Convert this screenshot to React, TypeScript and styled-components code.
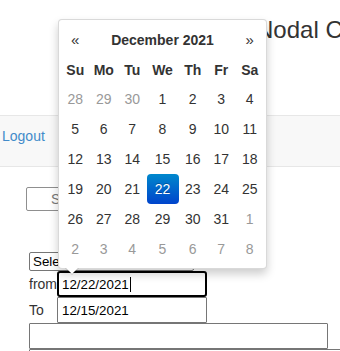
import React from 'react';
import styled, { createGlobalStyle, css } from 'styled-components';

const GlobalStyle = createGlobalStyle`
  html, body {
    margin: 0;
    padding: 0;
    background: #fff;
  }
  body {
    font-family: "Liberation Sans", Arial, sans-serif;
    font-size: 14px;
    color: #333;
    overflow: hidden;
  }
  * {
    box-sizing: border-box;
  }
`;

const Page = styled.div`
  position: relative;
  width: 340px;
  height: 351px;
  overflow: hidden;
`;

const Header = styled.header`
  height: 115px;
  padding: 17px 0 0 256px;
`;

const Title = styled.h3`
  margin: 0;
  font-size: 24px;
  line-height: 26px;
  font-weight: 400;
  color: #333;
  white-space: nowrap;
`;

const Navbar = styled.nav`
  height: 52px;
  background: #f8f8f8;
  border-top: 1px solid #e7e7e7;
  border-bottom: 1px solid #e7e7e7;
  display: flex;
  align-items: flex-start;
  padding: 10px 0 0 2px;
`;

const NavLink = styled.a`
  color: #428bca;
  text-decoration: none;
  font-size: 14px;
  line-height: 20px;
`;

const Main = styled.main`
  display: flex;
  flex-direction: column;
  align-items: flex-start;
  padding: 20px 0 0 29px;
`;

const SearchButton = styled.button`
  margin-left: -3px;
  height: 24px;
  padding: 0 24px;
  background: #fff;
  border: 1px solid #8f8f8f;
  border-radius: 2px;
  color: #777;
  font-family: "Liberation Sans", Arial, sans-serif;
  font-size: 14px;
`;

const Select = styled.div`
  margin-top: 41px;
  width: 165px;
  height: 19px;
  border: 1px solid #767676;
  border-radius: 2px;
  padding-left: 3px;
  font-size: 13.33px;
  line-height: 17px;
  color: #000;
`;

const FormRow = styled.div`
  display: flex;
  align-items: center;
`;

const Label = styled.label`
  width: 28px;
  font-size: 14px;
  color: #333;
`;

const Field = styled.div<{ $focused?: boolean; $width: number }>`
  width: ${p => p.$width}px;
  height: 26px;
  display: flex;
  align-items: center;
  border: 1px solid #767676;
  border-radius: 1px;
  padding-left: 4px;
  font-size: 13.33px;
  color: #000;
  ${p =>
    p.$focused &&
    css`
      border: 2px solid #000;
      border-radius: 3px;
      padding-left: 3px;
    `}
`;

const Caret = styled.span`
  display: inline-block;
  width: 1px;
  height: 15px;
  margin-left: 1px;
  background: #000;
`;

const Picker = styled.div`
  position: absolute;
  left: 58px;
  top: 19px;
  width: 209px;
  padding: 4px 2px;
  background: #fff;
  border: 1px solid rgba(0, 0, 0, 0.15);
  border-radius: 4px;
  box-shadow: 0 5px 10px rgba(0, 0, 0, 0.2);

  &::before,
  &::after {
    content: "";
    position: absolute;
    border-left-style: solid;
    border-right-style: solid;
    border-top-style: solid;
    border-left-color: transparent;
    border-right-color: transparent;
  }
  &::before {
    left: 6px;
    bottom: -7px;
    border-width: 7px 7px 0;
    border-top-color: rgba(0, 0, 0, 0.15);
  }
  &::after {
    left: 7px;
    bottom: -6px;
    border-width: 6px 6px 0;
    border-top-color: #fff;
  }
`;

const Grid = styled.div`
  display: grid;
  grid-template-columns: 28.5px 28.5px 28.5px 32px 28.5px 28.5px 28.5px;
  grid-auto-rows: 30px;
`;

const HeadCell = styled.div<{ $span?: number; $nav?: boolean }>`
  grid-column: span ${p => p.$span || 1};
  display: flex;
  align-items: center;
  justify-content: center;
  padding-top: 1px;
  font-weight: ${p => (p.$nav ? 400 : 700)};
  font-size: ${p => (p.$nav ? '15px' : '14px')};
  color: #333;
`;

const Day = styled.div<{ $muted?: boolean; $active?: boolean }>`
  display: flex;
  align-items: center;
  justify-content: center;
  border-radius: 4px;
  color: ${p => (p.$muted ? '#999' : '#333')};
  ${p =>
    p.$active &&
    css`
      color: #fff;
      background: linear-gradient(to bottom, #0088cc, #0044cc);
      text-shadow: 0 -1px 0 rgba(0, 0, 0, 0.25);
    `}
`;

const weekDays = ['Su', 'Mo', 'Tu', 'We', 'Th', 'Fr', 'Sa'];

const days: { n: number; muted?: boolean }[] = [
  ...[28, 29, 30].map(n => ({ n, muted: true })),
  ...Array.from({ length: 31 }, (_, i) => ({ n: i + 1 })),
  ...[1, 2, 3, 4, 5, 6, 7, 8].map(n => ({ n, muted: true })),
];

function DatePicker() {
  return (
    <Picker>
      <Grid>
        <HeadCell $nav>«</HeadCell>
        <HeadCell $span={5}>December 2021</HeadCell>
        <HeadCell $nav>»</HeadCell>
        {weekDays.map(d => (
          <HeadCell key={d}>{d}</HeadCell>
        ))}
        {days.map((d, i) => (
          <Day key={i} $muted={d.muted} $active={!d.muted && d.n === 22}>
            {d.n}
          </Day>
        ))}
      </Grid>
    </Picker>
  );
}

export default function App() {
  return (
    <>
      <GlobalStyle />
      <Page>
        <Header>
          <Title>Nodal Complaint Cell</Title>
        </Header>
        <Navbar>
          <NavLink href="#">Logout</NavLink>
        </Navbar>
        <Main>
          <SearchButton>Search</SearchButton>
          <Select>Select</Select>
          <FormRow>
            <Label>from</Label>
            <Field $focused $width={150}>
              12/22/2021
              <Caret />
            </Field>
          </FormRow>
          <FormRow>
            <Label>To</Label>
            <Field $width={150}>12/15/2021</Field>
          </FormRow>
          <Field $width={299} />
          <Field $width={320} />
        </Main>
        <DatePicker />
      </Page>
    </>
  );
}
